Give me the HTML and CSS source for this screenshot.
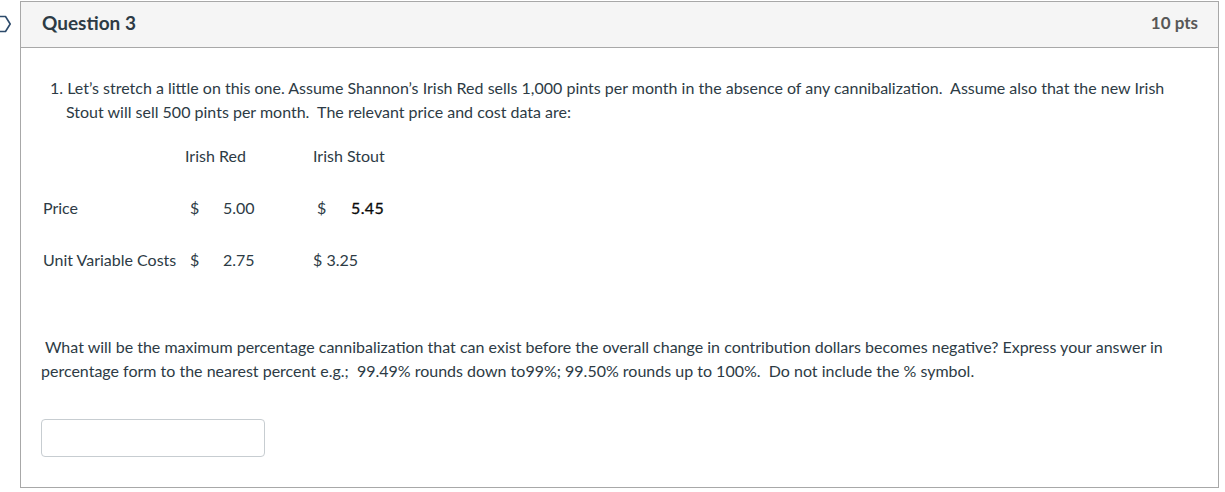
FILE: index.html
```html
<!DOCTYPE html>
<html>
<head>
<meta charset="utf-8">
<link rel="stylesheet" href="styles.css">
</head>
<body>
<div class="page">
  <div class="flag-col">
    <svg class="flag" width="12" height="18" viewBox="0 0 12 18"><path d="M-4 1.5 H5.5 L10.2 9 L5.5 16.5 H-4" fill="none" stroke="#2d4b6b" stroke-width="1.6" stroke-linejoin="round"/></svg>
  </div>
  <div class="card">
    <div class="card-header">
      <h2 class="title">Question 3</h2>
      <span class="pts">10 pts</span>
    </div>
    <div class="card-body">
      <p class="intro">1. Let’s stretch a little on this one. Assume Shannon’s Irish Red sells 1,000 pints per month in the absence of any cannibalization.&nbsp; Assume also that the new Irish Stout will sell 500 pints per month.&nbsp; The relevant price and cost data are:</p>
      <div class="data">
        <div class="cell"></div>
        <div class="cell">Irish Red</div>
        <div class="cell">Irish Stout</div>
        <div class="cell label">Price</div>
        <div class="cell money"><span class="dol">$</span><span class="num">5.00</span></div>
        <div class="cell money m3"><span class="dol">$</span><span class="num strong">5.45</span></div>
        <div class="cell label">Unit Variable Costs</div>
        <div class="cell money"><span class="dol">$</span><span class="num">2.75</span></div>
        <div class="cell">$ 3.25</div>
      </div>
      <p class="question">&nbsp;What will be the maximum percentage cannibalization that can exist before the overall change in contribution dollars becomes negative? Express your answer in percentage form to the nearest percent e.g.;&nbsp; 99.49% rounds down to99%; 99.50% rounds up to 100%.&nbsp; Do not include the % symbol.</p>
      <input class="answer" type="text">
    </div>
  </div>
</div>
</body>
</html>
```

FILE: styles.css
```css
* { box-sizing: border-box; }
html, body { margin: 0; padding: 0; background: #fff; }
body {
  font-family: Lato, "Open Sans", "Liberation Sans", sans-serif;
  color: #2d3b45;
  font-size: 16px;
  line-height: 24px;
}
.page {
  display: flex;
  padding-top: 1px;
  width: 1219px;
}
.flag-col {
  width: 20px;
  flex: none;
  padding-top: 14px;
}
.flag { display: block; }
.card {
  flex: 1;
  border: 1px solid #a8a8a8;
}
.card-header {
  display: flex;
  align-items: center;
  justify-content: space-between;
  height: 46px;
  padding: 0 20px 3px 21px;
  background: #f5f5f5;
  border-bottom: 1px solid #a8a8a8;
}
.title {
  margin: 0;
  font-size: 19px;
  font-weight: 700;
  color: #2d3b45;
}
.pts {
  font-size: 17px;
  font-weight: 700;
  color: #575757;
}
.card-body {
  padding: 28px 20px 30px 20px;
}
.intro {
  margin: 0 0 20px 9px;
  padding-left: 16px;
  text-indent: -16px;
  padding-right: 30px;
}
.data {
  display: grid;
  grid-template-columns: 142px 128px 200px;
  row-gap: 28px;
  margin-left: 2px;
}
.cell { white-space: nowrap; }
.money { display: flex; }
.dol { width: 38px; padding-left: 5px; }
.m3 .dol { width: 38px; padding-left: 4px; }
.strong { color: #0a0a0a; letter-spacing: 0.4px; -webkit-text-stroke: 0.3px #0a0a0a; }
.question {
  margin: 63px 0 36px 0;
}
.answer {
  display: block;
  width: 224px;
  height: 38px;
  margin-left: 0;
  border: 1px solid #c7cdd1;
  border-radius: 4px;
  background: #fff;
}
```
